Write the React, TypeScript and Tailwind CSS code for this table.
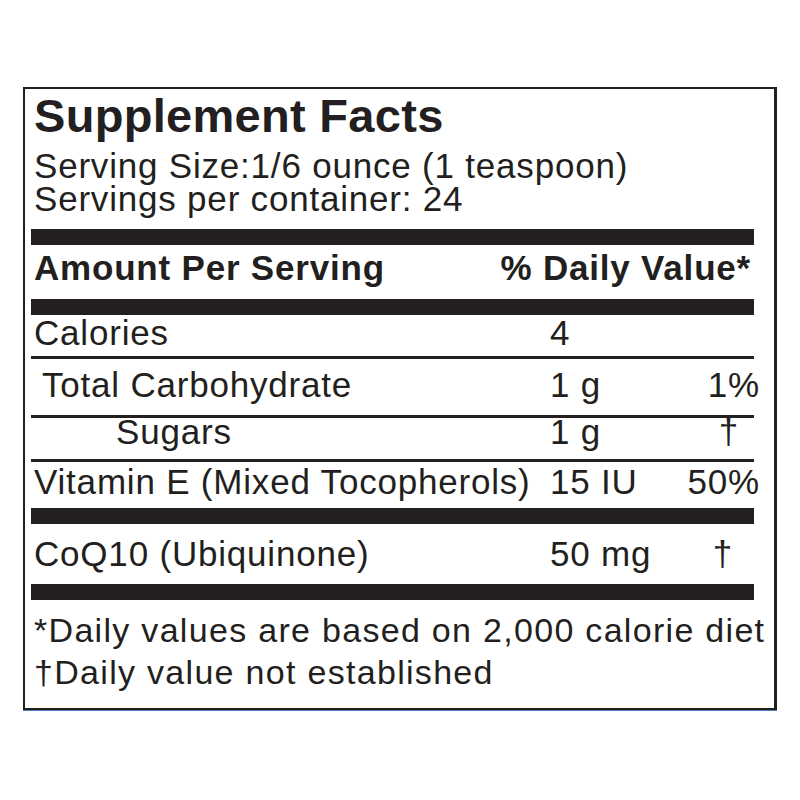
type Row = {
  name: string;
  amount: string;
  dv?: string;
  indent?: string;
  height: string;
  leading: string;
  dvPad?: string;
};

const ink = "text-[#231f20]";

function Bar({ h = "h-[16px]" }: { h?: string }) {
  return <div className={`${h} bg-[#231f20]`} />;
}

function Line() {
  return <div className="h-[3px] bg-[#231f20]" />;
}

function NutrientRow({ row }: { row: Row }) {
  return (
    <div className={`flex ${row.height} ${row.leading} text-[35px] tracking-[0.8px] whitespace-nowrap`}>
      <div className={`w-[519px] shrink-0 ${row.indent ?? "pl-[3px]"}`}>{row.name}</div>
      <div className="w-[120px] shrink-0">{row.amount}</div>
      <div className={`flex-1 -mr-[6px] text-right ${row.dvPad ?? ""}`}>{row.dv}</div>
    </div>
  );
}

export default function App() {
  const calories: Row = { name: "Calories", amount: "4", height: "h-[41px]", leading: "leading-[36px]" };
  const carbs: Row = {
    name: "Total Carbohydrate",
    amount: "1 g",
    dv: "1%",
    indent: "pl-[11px]",
    height: "h-[56px]",
    leading: "leading-[52px]",
  };
  const sugars: Row = {
    name: "Sugars",
    amount: "1 g",
    dv: "†",
    indent: "pl-[85px]",
    height: "h-[41px]",
    leading: "leading-[27px]",
    dvPad: "pr-[21px]",
  };
  const vitE: Row = {
    name: "Vitamin E (Mixed Tocopherols)",
    amount: "15 IU",
    dv: "50%",
    height: "h-[46px]",
    leading: "leading-[40px]",
  };
  const coq: Row = {
    name: "CoQ10 (Ubiquinone)",
    amount: "50 mg",
    dv: "†",
    height: "h-[60px]",
    leading: "leading-[60px]",
    dvPad: "pr-[27px]",
  };

  return (
    <div className={`min-h-screen bg-white pt-[87px] pl-[23px] ${ink}`} style={{ fontFamily: '"Liberation Sans", Arial, sans-serif' }}>
      <div className="w-[754px] border-2 border-r-[3px] border-[#231f20] pl-[6px] pr-[20px] shadow-[0_1px_0_#4f7fc0]">
        <div className="pl-[3px] text-[47px] font-bold leading-[54px] tracking-[0.3px]">Supplement Facts</div>
        <div className="mt-[6px] pl-[3px] text-[35px] leading-[33px] tracking-[0.8px]">
          <div>Serving Size:1/6 ounce (1 teaspoon)</div>
          <div>Servings per container: 24</div>
        </div>
        <div className="mt-[14px]">
          <Bar />
        </div>
        <div className="flex h-[54px] justify-between pl-[3px] pr-[3px] text-[35px] font-bold leading-[46px] tracking-[0.8px]">
          <span>Amount Per Serving</span>
          <span>% Daily Value*</span>
        </div>
        <Bar />
        <NutrientRow row={calories} />
        <Line />
        <NutrientRow row={carbs} />
        <Line />
        <NutrientRow row={sugars} />
        <Line />
        <NutrientRow row={vitE} />
        <Bar />
        <NutrientRow row={coq} />
        <Bar />
        <div className="pt-[10px] pb-[15px] pl-[3px] text-[34px] leading-[41.5px] tracking-[1.3px] whitespace-nowrap">
          <div>*Daily values are based on 2,000 calorie diet</div>
          <div>†Daily value not established</div>
        </div>
      </div>
    </div>
  );
}
